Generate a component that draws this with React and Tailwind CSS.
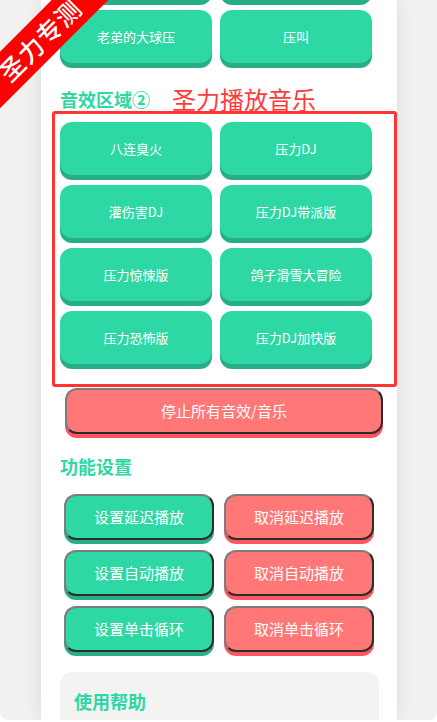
import React from 'react';

const topButtons = ['压力起飞', '压力大王', '老弟的大球压', '压叫'];

const soundButtons = [
  '八连臭火',
  '压力DJ',
  '灌伤害DJ',
  '压力DJ带派版',
  '压力惊悚版',
  '鸽子滑雪大冒险',
  '压力恐怖版',
  '压力DJ加快版',
];

const settings = [
  ['设置延迟播放', '取消延迟播放'],
  ['设置自动播放', '取消自动播放'],
  ['设置单击循环', '取消单击循环'],
];

const font = { fontFamily: '"Noto Sans CJK SC", "Noto Sans", sans-serif' };

const SoundButton = ({ label }) => (
  <button className="h-[53px] rounded-[12px] bg-[#2ed8a5] text-[13px] text-white shadow-[0_5px_0_#27ad87]">
    {label}
  </button>
);

const App = () => {
  return (
    <div className="min-h-screen bg-white" style={font}>
      <div className="relative h-[720px] overflow-hidden rounded-b-[8px] bg-[#f1f1ef]">
        {/* Corner ribbon */}
        <div className="absolute left-[-52px] top-[20px] z-10 flex h-[40px] w-[184px] -rotate-45 items-center justify-center bg-[#ff0000] text-[25px] font-medium tracking-[1px] text-white">
          圣力专测
        </div>

        <div className="ml-[41px] flow-root h-full w-[356px] bg-white shadow-[0_0_18px_rgba(0,0,0,0.09)]">
          {/* Scrolled: top buttons partially hidden */}
          <div className="-mt-[53px] ml-[19px] grid grid-cols-[152px_152px] gap-x-2 gap-y-[10px]">
            {topButtons.map((label) => (
              <SoundButton key={label} label={label} />
            ))}
          </div>

          {/* Sound area */}
          <div className="ml-[19px] mt-[24px] flex h-[24px] items-center">
            <h2 className="text-[18px] font-bold text-[#2ed8a5]">音效区域②</h2>
            <span className="ml-[22px] text-[24px] text-[#ff3b3b]">圣力播放音乐</span>
          </div>

          <div className="ml-[11px] w-[345px] rounded-[3px] border-[3px] border-[#ff3434] pb-[20px] pl-[5px] pt-[8px]">
            <div className="grid grid-cols-[152px_152px] gap-x-2 gap-y-[10px]">
              {soundButtons.map((label) => (
                <SoundButton key={label} label={label} />
              ))}
            </div>
          </div>

          <button className="ml-[24px] mt-[1px] h-[46px] w-[318px] rounded-[12px] border-2 border-[#7d7d7d] border-b-[#2c2c2c] border-r-[#2c2c2c] bg-[#ff7777] text-[15px] text-white shadow-[0_4px_0_#ff5462]">
            停止所有音效/音乐
          </button>

          {/* Settings */}
          <div className="ml-[19px] mt-[20px] flex h-[24px] items-center">
            <h2 className="text-[18px] font-bold text-[#2ed8a5]">功能设置</h2>
          </div>

          <div className="ml-[23px] mt-[16px] grid grid-cols-[150px_150px] gap-x-[10px] gap-y-[10px]">
            {settings.map(([on, off]) => (
              <React.Fragment key={on}>
                <button className="h-[46px] rounded-[12px] border-2 border-[#7d7d7d] border-b-[#2c2c2c] border-r-[#2c2c2c] bg-[#2ed8a5] text-[15px] text-white shadow-[0_4px_0_#2aae88]">
                  {on}
                </button>
                <button className="h-[46px] rounded-[12px] border-2 border-[#7d7d7d] border-b-[#2c2c2c] border-r-[#2c2c2c] bg-[#ff7777] text-[15px] text-white shadow-[0_4px_0_#ff5462]">
                  {off}
                </button>
              </React.Fragment>
            ))}
          </div>

          {/* Help */}
          <div className="ml-[19px] mt-[20px] h-[120px] w-[319px] rounded-[12px] bg-[#f3f3f1] pl-[14px] pt-[17px]">
            <div className="flex h-[24px] items-center">
              <h2 className="text-[18px] font-bold text-[#2ed8a5]">使用帮助</h2>
            </div>
          </div>
        </div>
      </div>
    </div>
  );
};

export default App;
